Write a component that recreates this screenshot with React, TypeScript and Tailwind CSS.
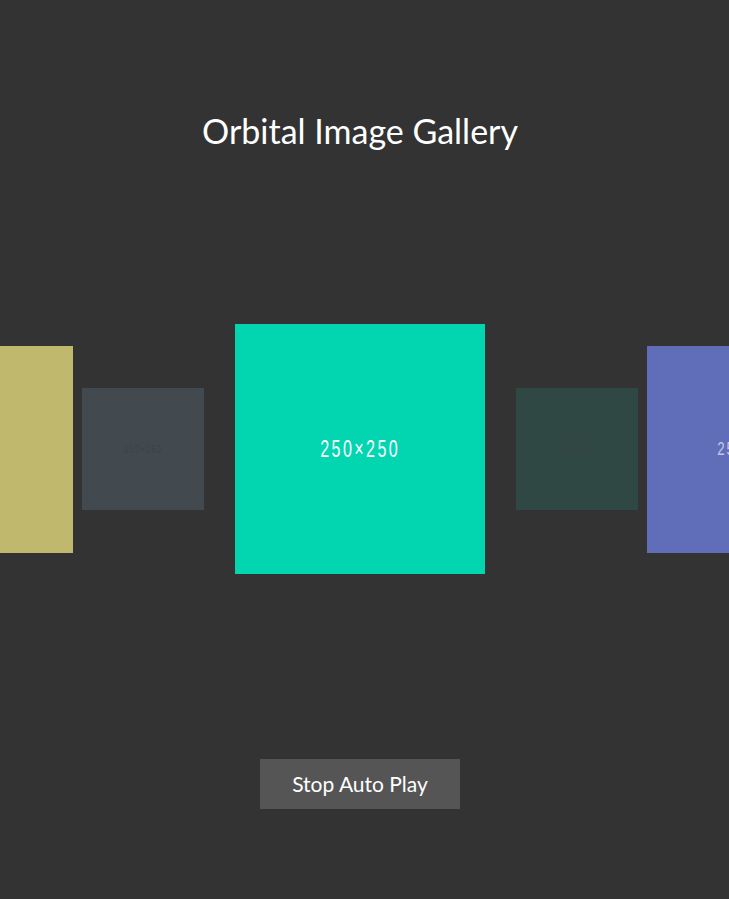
import React from "react";

const numFont = { fontFamily: '"Liberation Sans", "DejaVu Sans", sans-serif' };

function Box({ size, bg, text, fs }: { size: string; bg: string; text: string; fs: string }) {
  return (
    <div className={`shrink-0 flex items-center justify-center ${size} ${bg}`}>
      <span
        className={`inline-block ${text} ${fs} tracking-[0.15em] scale-x-[0.7] whitespace-nowrap`}
        style={numFont}
      >
        250×250
      </span>
    </div>
  );
}

export default function App() {
  return (
    <div
      className="min-h-[899px] w-full bg-[#333333] overflow-hidden"
      style={{ fontFamily: '"Lato", "Open Sans", "Noto Sans", sans-serif' }}
    >
      <div className="w-[720px] flex flex-col items-center">
        <h1 className="pt-[111px] text-[34px] leading-[40px] text-white font-normal">Orbital Image Gallery</h1>
        <div className="mt-[173px] h-[250px] w-full flex items-center justify-center">
          <Box size="w-[207px] h-[207px]" bg="bg-[#bfb86d]" text="text-[#d9d6b4]" fs="text-[19px]" />
          <div className="w-[9px] shrink-0" />
          <Box size="w-[122px] h-[122px]" bg="bg-[#424a50]" text="text-[#3c4245]" fs="text-[11px]" />
          <div className="w-[31px] shrink-0" />
          <Box size="w-[250px] h-[250px]" bg="bg-[#02d6b1]" text="text-white" fs="text-[23px]" />
          <div className="w-[31px] shrink-0" />
          <Box size="w-[122px] h-[122px]" bg="bg-[#2f4843]" text="text-[#39463f]" fs="text-[11px]" />
          <div className="w-[9px] shrink-0" />
          <Box size="w-[207px] h-[207px]" bg="bg-[#606db9]" text="text-[#c3c8e6]" fs="text-[19px]" />
        </div>
        <button className="mt-[185px] w-[200px] h-[50px] bg-[#555555] text-white text-[21px]">
          Stop Auto Play
        </button>
      </div>
    </div>
  );
}
